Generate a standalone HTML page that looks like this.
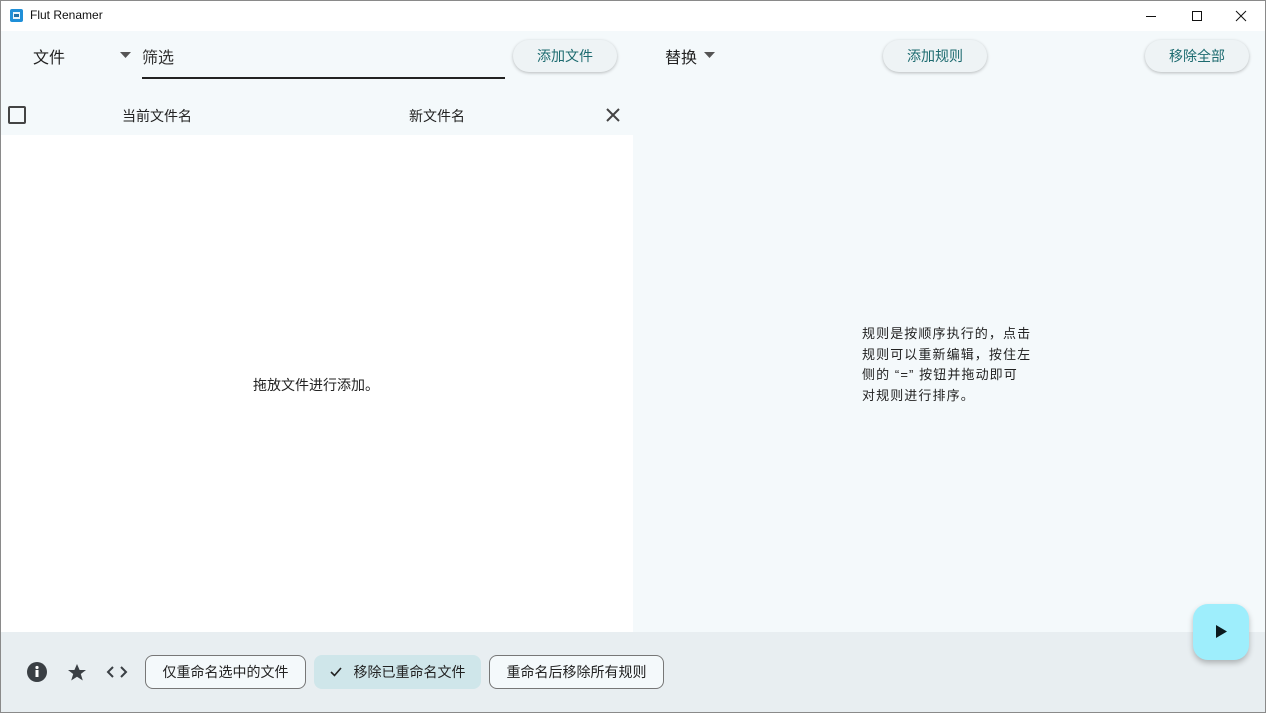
<!DOCTYPE html>
<html><head><meta charset="utf-8"><style>
*{box-sizing:border-box;margin:0;padding:0}
body{width:1266px;height:713px;overflow:hidden;font-family:"Liberation Sans","Noto Sans CJK SC",sans-serif;background:#f4f9fb;position:relative;color:#222}
.win{position:absolute;inset:0;border:1px solid #8a8a8a}
.a{position:absolute}
.title{left:0;top:0;width:1266px;height:31px;background:#fff}
.pill{position:absolute;height:32px;border-radius:16px;background:#eef3f5;box-shadow:0 1px 3px rgba(0,0,0,.25);color:#1d6b70;font-size:14px;display:flex;align-items:center;justify-content:center}
.ob{position:absolute;top:655px;height:34px;border:1px solid #777;border-radius:8px;font-size:14px;display:flex;align-items:center;justify-content:center;color:#222}
</style></head><body>
<div class="a title"></div>
<svg class="a" style="left:10px;top:9px" width="13" height="13"><rect width="13" height="13" rx="2" fill="#1f8fd8"/><rect x="3" y="3" width="7" height="7" fill="#fff" opacity=".9"/><rect x="4" y="5" width="5" height="3" fill="#1f6fa8"/></svg>
<div class="a" style="left:30px;top:8px;font-size:12px;color:#111">Flut Renamer</div>
<svg class="a" style="left:1140px;top:8px" width="120" height="16" stroke="#111" fill="none" stroke-width="1"><line x1="6" y1="8.5" x2="16" y2="8.5"/><rect x="52.5" y="3.5" width="9" height="9"/><path d="M96 3l10 10M106 3l-10 10"/></svg>
<div class="a" style="left:33px;top:44px;font-size:16px">文件</div>
<svg class="a" style="left:120px;top:52px" width="11" height="6"><path d="M0 0h11L5.5 6z" fill="#555"/></svg>
<div class="a" style="left:142px;top:44px;font-size:16px;color:#333">筛选</div>
<div class="a" style="left:142px;top:77px;width:363px;height:1.5px;background:#222"></div>
<div class="pill" style="left:513px;top:40px;width:104px">添加文件</div>
<div class="a" style="left:665px;top:44px;font-size:16px">替换</div>
<svg class="a" style="left:704px;top:52px" width="11" height="6"><path d="M0 0h11L5.5 6z" fill="#555"/></svg>
<div class="pill" style="left:883px;top:40px;width:104px">添加规则</div>
<div class="pill" style="left:1145px;top:40px;width:104px">移除全部</div>
<div class="a" style="left:8px;top:106px;width:18px;height:18px;border:2px solid #444;border-radius:2px"></div>
<div class="a" style="left:122px;top:106px;font-size:14px">当前文件名</div>
<div class="a" style="left:409px;top:106px;font-size:14px">新文件名</div>
<svg class="a" style="left:606px;top:108px" width="14" height="14"><path d="M1 1l12 12M13 1L1 13" stroke="#444" stroke-width="2"/></svg>
<div class="a" style="left:1px;top:135px;width:632px;height:497px;background:#fff"></div>
<div class="a" style="left:253px;top:375px;font-size:14px">拖放文件进行添加。</div>
<div class="a" style="left:862px;top:324px;font-size:13px;line-height:20.5px;white-space:nowrap;letter-spacing:1.1px">规则是按顺序执行的，点击<br>规则可以重新编辑，按住左<br>侧的 “=” 按钮并拖动即可<br>对规则进行排序。</div>
<div class="a" style="left:1px;top:632px;width:1264px;height:80px;background:#e8eef1"></div>
<svg class="a" style="left:26px;top:661px" width="22" height="22"><circle cx="11" cy="11" r="10" fill="#3a3f44"/><rect x="9.5" y="9" width="3" height="7" fill="#fff"/><circle cx="11" cy="6.5" r="1.6" fill="#fff"/></svg>
<svg class="a" style="left:67px;top:663px" width="20" height="19"><path d="M10 1l2.6 6h6.4l-5.2 4 2 6.5L10 13.8 4.2 17.5l2-6.5L1 7h6.4z" fill="#3a3f44"/></svg>
<svg class="a" style="left:106px;top:664px" width="22" height="16" fill="none" stroke="#3a3f44" stroke-width="2"><path d="M7 3L2 8l5 5M15 3l5 5-5 5"/></svg>
<div class="ob" style="left:145px;width:161px;background:#f4f9fb">仅重命名选中的文件</div>
<div class="ob" style="left:314px;width:167px;border:none;background:#cfe6ea"><svg width="12" height="10" style="margin-right:12px"><path d="M1 5l3.5 3.5L11 1" fill="none" stroke="#222" stroke-width="1.6"/></svg>移除已重命名文件</div>
<div class="ob" style="left:489px;width:175px;background:#f4f9fb">重命名后移除所有规则</div>
<div class="a" style="left:1193px;top:604px;width:56px;height:56px;border-radius:15px;background:#9eeefc;box-shadow:0 3px 6px rgba(0,0,0,.25)"></div>
<svg class="a" style="left:1216px;top:625px" width="11" height="13"><path d="M0 0l11 6.5L0 13z" fill="#0b1a1e"/></svg>
<div class="win"></div>
</body></html>
